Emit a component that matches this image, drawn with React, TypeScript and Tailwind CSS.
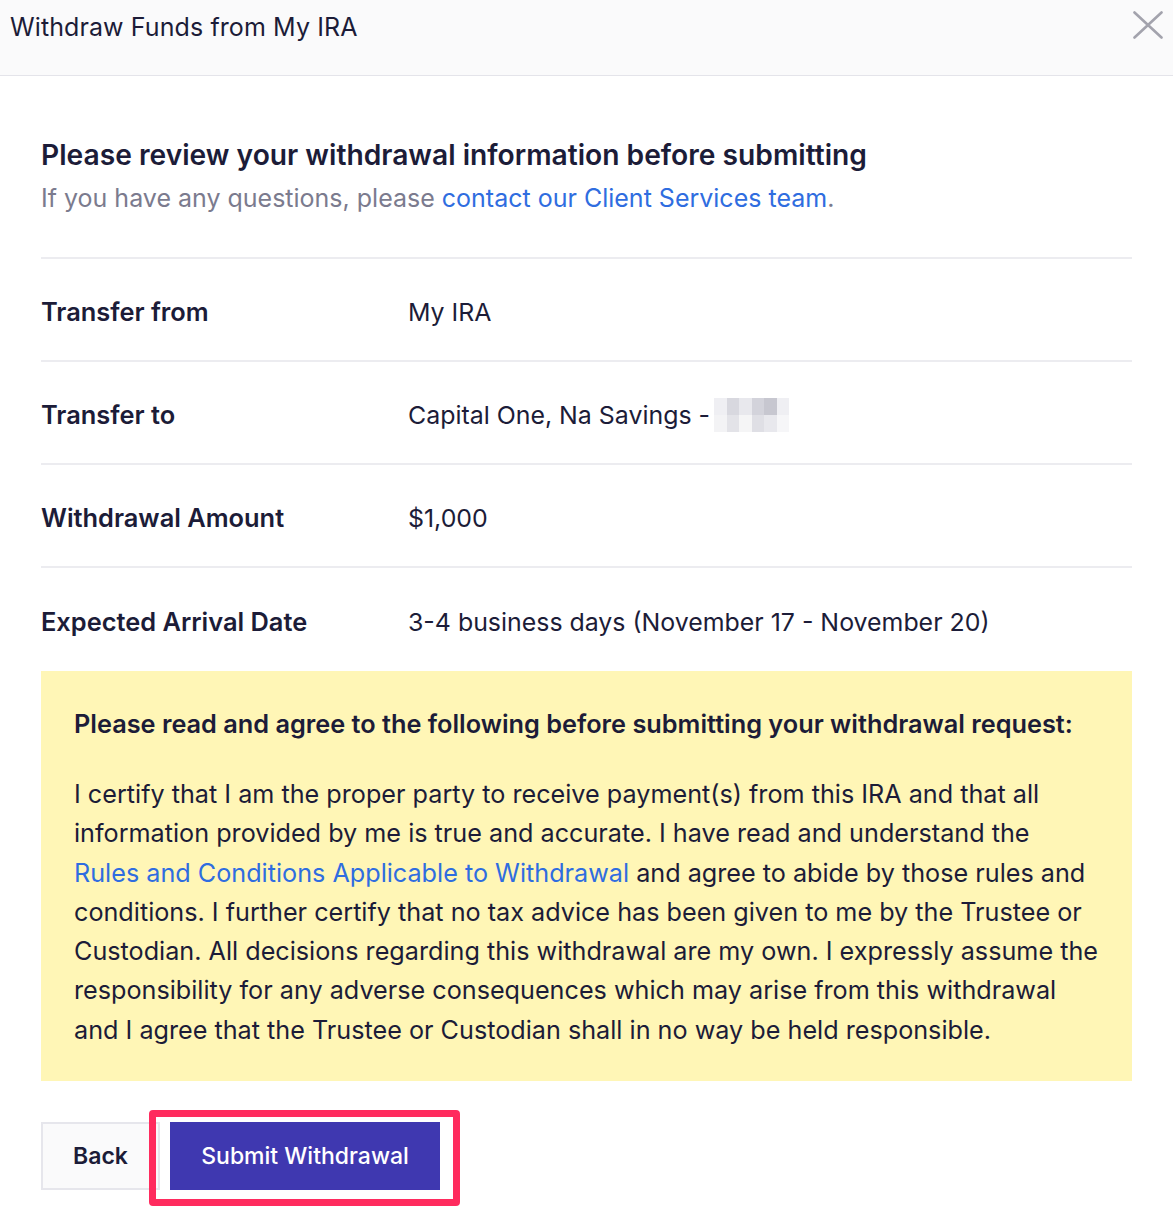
const rows = [
  { label: "Transfer from", value: "My IRA" },
  { label: "Transfer to", value: "Capital One, Na Savings -", masked: true },
  { label: "Withdrawal Amount", value: "$1,000" },
  { label: "Expected Arrival Date", value: "3-4 business days (November 17 - November 20)" },
];

function Masked() {
  // blurred account number
  return (
    <span className="inline-grid grid-cols-6 grid-rows-2 ml-[4px] w-[75px] h-[34px] opacity-90">
      <span className="bg-[#eeeef2]" />
      <span className="bg-[#d4d4dc]" />
      <span className="bg-[#e6e6ec]" />
      <span className="bg-[#cfcfd8]" />
      <span className="bg-[#c2c2cc]" />
      <span className="bg-[#eeeef2]" />
      <span className="bg-[#f2f2f5]" />
      <span className="bg-[#e0e0e6]" />
      <span className="bg-[#f4f4f6]" />
      <span className="bg-[#dcdce3]" />
      <span className="bg-[#e6e6ec]" />
      <span className="bg-[#f6f6f8]" />
    </span>
  );
}

function CloseIcon() {
  return (
    <svg width="30" height="28" viewBox="0 0 30 28" className="mt-[11px]">
      <path d="M1.5 1.5 28.5 26.5M28.5 1.5 1.5 26.5" stroke="#a3a3ad" strokeWidth="2.6" strokeLinecap="round" />
    </svg>
  );
}

export default function App() {
  return (
    <div className="w-[1173px] min-h-[1206px] bg-white text-[#1c1c38] font-['Inter','Liberation_Sans',sans-serif]">
      <div className="h-[76px] bg-[#fafafb] border-b border-[#e4e4ea] flex items-start justify-between pl-[10px] pr-[10px]">
        <div className="pt-[10px] text-[25px] leading-[34px] tracking-[0.1px]">Withdraw Funds from My IRA</div>
        <CloseIcon />
      </div>

      <div className="px-[41px] pt-[60px]">
        <h1 className="text-[28.2px] leading-[38px] font-semibold">
          Please review your withdrawal information before submitting
        </h1>
        <p className="mt-[7px] text-[25px] leading-[34px] text-[#7b7b8e]">
          If you have any questions, please <a className="text-[#2f6de0]">contact our Client Services team</a>.
        </p>

        <div className="mt-[42px] border-t-2 border-[#ececf0]">
          {rows.map((r, i) => (
            <div
              key={r.label}
              className={`flex items-center h-[103px] pt-[6px] ${i < rows.length - 1 ? "border-b-2 border-[#ececf0]" : ""}`}
            >
              <div className="w-[367px] text-[25.4px] font-semibold">{r.label}</div>
              <div className="text-[24.9px] flex items-center">
                {r.value}
                {r.masked && <Masked />}
              </div>
            </div>
          ))}
        </div>

        <div className="bg-[#fff6b6] pl-[33px] pr-[20px] pt-[35px] pb-[31px]">
          <div className="text-[25.3px] leading-[36px] font-semibold whitespace-nowrap">
            Please read and agree to the following before submitting your withdrawal request:
          </div>
          <p className="mt-[33px] text-[25.2px] leading-[39.3px] whitespace-nowrap">
            I certify that I am the proper party to receive payment(s) from this IRA and that all
            <br />
            information provided by me is true and accurate. I have read and understand the
            <br />
            <a className="text-[#2f6de0]">Rules and Conditions Applicable to Withdrawal</a> and agree to abide by those
            rules and
            <br />
            conditions. I further certify that no tax advice has been given to me by the Trustee or
            <br />
            Custodian. All decisions regarding this withdrawal are my own. I expressly assume the
            <br />
            responsibility for any adverse consequences which may arise from this withdrawal
            <br />
            and I agree that the Trustee or Custodian shall in no way be held responsible.
          </p>
        </div>

        <div className="mt-[41px] flex items-center">
          <button className="h-[68px] w-[119px] bg-[#fafafb] border-2 border-[#e6e6ec] text-[23px] font-semibold text-[#1c1c38]">
            Back
          </button>
          <div className="relative ml-[10px]">
            <button className="h-[68px] w-[270px] bg-[#3f38b0] text-white text-[23px] font-medium">
              Submit Withdrawal
            </button>
            <span className="absolute left-[-21px] right-[-20px] top-[-12px] bottom-[-16px] border-[7px] border-[#ff2b5e] rounded-[4px]" />
          </div>
        </div>
      </div>
    </div>
  );
}
